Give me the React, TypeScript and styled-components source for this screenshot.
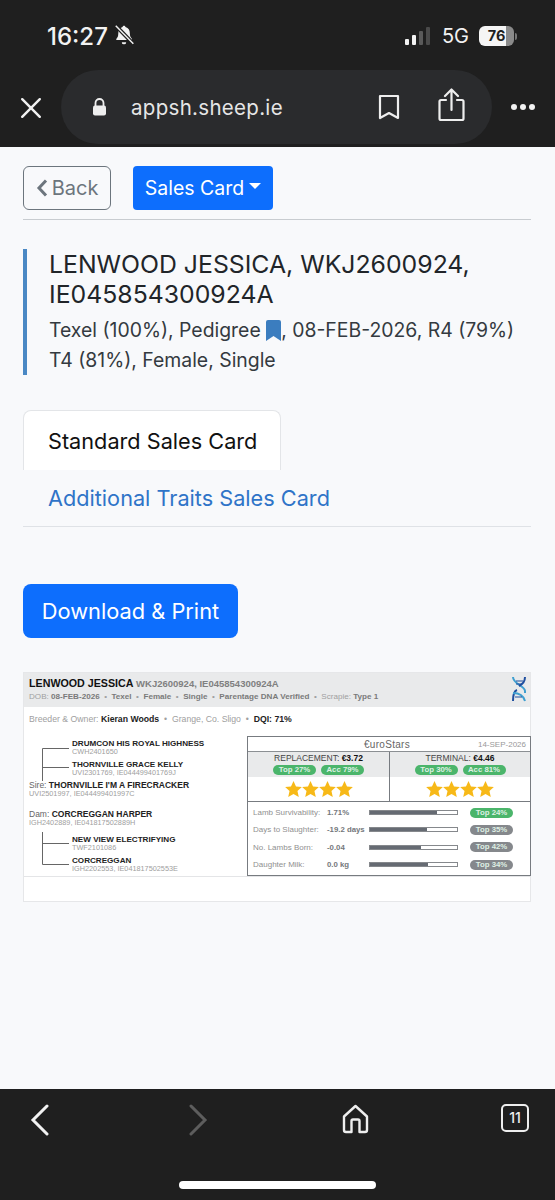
import React from "react";
import styled, { createGlobalStyle } from "styled-components";

const GlobalStyle = createGlobalStyle`
  html, body { margin: 0; padding: 0; background: #f8f9fb; }
  * { box-sizing: border-box; }
`;

const stats = [
  { label: "Lamb Survivability:", value: "1.71%", fill: 77, top: "Top 24%", good: true },
  { label: "Days to Slaughter:", value: "-19.2 days", fill: 66, top: "Top 35%", good: false },
  { label: "No. Lambs Born:", value: "-0.04", fill: 59, top: "Top 42%", good: false },
  { label: "Daughter Milk:", value: "0.0 kg", fill: 67, top: "Top 34%", good: false },
];

function Stars() {
  return (
    <StarRow>
      {[0, 1, 2, 3].map((i) => (
        <svg key={i} width="17" height="16" viewBox="0 0 24 23">
          <path d="M12 0l3.6 8 8.4.8-6.3 5.7 1.9 8.5L12 18.6 4.4 23l1.9-8.5L0 8.8 8.4 8z" fill="#f7b918" />
        </svg>
      ))}
    </StarRow>
  );
}

export default function App() {
  return (
    <Page>
      <GlobalStyle />
      <Chrome>
        <StatusBar>
          <Clock>16:27</Clock>
          <svg width="22" height="22" viewBox="0 0 20 20" fill="#f2f2f2">
            <path d="M10 1.5c.8 0 1.3.6 1.4 1.3 2.6.7 3.9 3 3.9 5.6 0 2.6.8 3.900 2 5.200v1H3v-1c1.200-1.300 1.800-2.600 1.800-5.200 0-2.600 1.300-4.900 3.800-5.600C8.700 2.100 9.200 1.500 10 1.500z" />
            <path d="M8 16.500h4a2 2 0 01-4 0z" />
            <path d="M2.500 1.500L18.500 18" stroke="#1f1f1f" strokeWidth="3.500" />
            <path d="M2.500 1.500L18.500 18" stroke="#f2f2f2" strokeWidth="1.300" />
          </svg>
          <StatusRight>
            <svg width="27" height="18" viewBox="0 0 27 18">
              <rect x="0" y="12" width="4" height="6" rx="1" fill="#f2f2f2" />
              <rect x="7" y="8" width="4" height="10" rx="1" fill="#f2f2f2" />
              <rect x="14" y="4" width="4" height="14" rx="1" fill="#5a5a5a" />
              <rect x="21" y="0" width="4" height="18" rx="1" fill="#4a4a4a" />
            </svg>
            <Network>5G</Network>
            <Battery>
              <BatteryBody>76</BatteryBody>
              <BatteryTip />
            </Battery>
          </StatusRight>
        </StatusBar>
        <UrlRow>
          <svg width="22" height="22" viewBox="0 0 20 20" stroke="#f2f2f2" strokeWidth="2.200" strokeLinecap="round">
            <path d="M2 2l16 16M18 2L2 18" />
          </svg>
          <UrlPill>
            <svg width="15" height="18" viewBox="0 0 15 18" fill="#eee">
              <path d="M3.500 8V5a4 4 0 018 0v3" fill="none" stroke="#eee" strokeWidth="1.800" />
              <rect x="1" y="7.500" width="13" height="10" rx="2" />
            </svg>
            <UrlText>appsh.sheep.ie</UrlText>
            <svg width="22" height="26" viewBox="0 0 22 26" fill="none" stroke="#eee" strokeWidth="2.200" strokeLinejoin="round">
              <path d="M2 2h18v22l-9-5-9 5z" />
            </svg>
            <ShareIcon width="27" height="34" viewBox="0 0 27 34" fill="none" stroke="#eee" strokeWidth="2.200" strokeLinecap="round" strokeLinejoin="round">
              <path d="M8 12H3a1.500 1.500 0 00-1.500 1.500v17A1.500 1.500 0 003 32h21a1.500 1.500 0 001.500-1.500v-17A1.500 1.500 0 0024 12h-5" />
              <path d="M13.500 22V2M7 8l6.500-6.500L20 8" />
            </ShareIcon>
          </UrlPill>
          <MoreDots>
            <i />
            <i />
            <i />
          </MoreDots>
        </UrlRow>
      </Chrome>

      <Content>
        <ButtonRow>
          <BackButton>
            <svg width="12" height="18" viewBox="0 0 12 18" fill="none" stroke="#6c757d" strokeWidth="3">
              <path d="M10 1.500L3 9l7 7.500" />
            </svg>
            Back
          </BackButton>
          <SalesButton>
            Sales Card
            <Caret />
          </SalesButton>
        </ButtonRow>
        <Rule />

        <TitleBlock>
          <Title>
            LENWOOD JESSICA, WKJ2600924,
            <br />
            IE045854300924A
          </Title>
          <Meta>
            Texel (100%), Pedigree{" "}
            <svg width="15" height="21" viewBox="0 0 15 21" fill="#3b7dbf">
              <path d="M0 2a2 2 0 012-2h11a2 2 0 012 2v19l-7.500-5L0 21z" />
            </svg>
            , 08-FEB-2026, R4 (79%)
            <br />
            T4 (81%), Female, Single
          </Meta>
        </TitleBlock>

        <Tabs>
          <ActiveTab>Standard Sales Card</ActiveTab>
          <TabLink>Additional Traits Sales Card</TabLink>
        </Tabs>

        <DownloadButton>Download &amp; Print</DownloadButton>

        <SalesCard>
          <CardHeader>
            <HeaderText>
              <SheepName>
                LENWOOD JESSICA <SheepTag>WKJ2600924, IE045854300924A</SheepTag>
              </SheepName>
              <SheepFacts>
                DOB: <b>08-FEB-2026</b>&nbsp; • &nbsp;<b>Texel</b>&nbsp; • &nbsp;<b>Female</b>&nbsp; • &nbsp;<b>Single</b>&nbsp; • &nbsp;
                <b>Parentage DNA Verified</b>&nbsp; • &nbsp;Scrapie: <b>Type 1</b>
              </SheepFacts>
            </HeaderText>
            <svg width="16" height="26" viewBox="0 0 16 26" fill="none" strokeWidth="2">
              <path d="M2 1c0 7 12 9 12 14v2" stroke="#3f9fd0" />
              <path d="M14 1c0 6-4 8-6 9M6 14c-3 1-4 4-4 11" stroke="#1f4f9f" />
              <path d="M2 17c4 0 10 1 12 8" stroke="#3f9fd0" />
              <path d="M5 5h7M4 21h7M5 8h6" stroke="#1f4f9f" strokeWidth="1.200" />
            </svg>
          </CardHeader>
          <BreederRow>
            Breeder &amp; Owner: <strong>Kieran Woods</strong>&nbsp; • &nbsp;Grange, Co. Sligo&nbsp; • &nbsp;<strong>DQI: 71%</strong>
          </BreederRow>
          <CardBody>
            <Pedigree>
              <Branch>
                <UpperBracket width="27" height="33" viewBox="0 0 27 33" fill="none" stroke="#666" strokeWidth="1">
                  <path d="M.5 .5V33M.5 .5H27M.5 19.500H27" />
                </UpperBracket>
                <Names>
                  <div>
                    <AnimalName $small>DRUMCON HIS ROYAL HIGHNESS</AnimalName>
                    <AnimalId>CWH2401650</AnimalId>
                  </div>
                  <div>
                    <AnimalName $small>THORNVILLE GRACE KELLY</AnimalName>
                    <AnimalId>UVI2301769, IE044499401769J</AnimalId>
                  </div>
                </Names>
              </Branch>
              <Parent>
                <AnimalName>
                  <Soft>Sire:</Soft> THORNVILLE I'M A FIRECRACKER
                </AnimalName>
                <AnimalId>UVI2501997, IE044499401997C</AnimalId>
              </Parent>
              <Parent $dam>
                <AnimalName>
                  <Soft>Dam:</Soft> CORCREGGAN HARPER
                </AnimalName>
                <AnimalId>IGH2402889, IE041817502889H</AnimalId>
              </Parent>
              <Branch $lower>
                <LowerBracket width="27" height="33" viewBox="0 0 27 33" fill="none" stroke="#666" strokeWidth="1">
                  <path d="M.5 0V32.500H27M.5 11.500H27" />
                </LowerBracket>
                <Names>
                  <div>
                    <AnimalName $small>NEW VIEW ELECTRIFYING</AnimalName>
                    <AnimalId>TWF2101086</AnimalId>
                  </div>
                  <div>
                    <AnimalName $small>CORCREGGAN</AnimalName>
                    <AnimalId>IGH2202553, IE041817502553E</AnimalId>
                  </div>
                </Names>
              </Branch>
            </Pedigree>
            <EuroStars>
              <EuroHeader>
                <EuroTitle>€uroStars</EuroTitle>
                <EuroDate>14-SEP-2026</EuroDate>
              </EuroHeader>
              <Scores>
                <ScoreCol>
                  <ScoreHead>
                    <ScoreLabel>
                      REPLACEMENT: <b>€3.72</b>
                    </ScoreLabel>
                    <PillRow>
                      <Pill $good>Top 27%</Pill>
                      <Pill $good>Acc 79%</Pill>
                    </PillRow>
                  </ScoreHead>
                  <Stars />
                </ScoreCol>
                <ScoreCol>
                  <ScoreHead>
                    <ScoreLabel>
                      TERMINAL: <b>€4.46</b>
                    </ScoreLabel>
                    <PillRow>
                      <Pill $good>Top 30%</Pill>
                      <Pill $good>Acc 81%</Pill>
                    </PillRow>
                  </ScoreHead>
                  <Stars />
                </ScoreCol>
              </Scores>
              <StatList>
                {stats.map((s) => (
                  <StatRow key={s.label}>
                    <StatLabel>{s.label}</StatLabel>
                    <StatValue>{s.value}</StatValue>
                    <Bar>
                      <BarFill style={{ width: `${s.fill}%` }} />
                    </Bar>
                    <Pill $good={s.good}>{s.top}</Pill>
                  </StatRow>
                ))}
              </StatList>
            </EuroStars>
          </CardBody>
        </SalesCard>
      </Content>

      <BottomBar>
        <NavIcons>
          <svg width="20" height="32" viewBox="0 0 20 32" fill="none" stroke="#f2f2f2" strokeWidth="3" strokeLinecap="round">
            <path d="M17 2L3 16l14 14" />
          </svg>
          <svg width="20" height="32" viewBox="0 0 20 32" fill="none" stroke="#5d5d5d" strokeWidth="3" strokeLinecap="round">
            <path d="M3 2l14 14L3 30" />
          </svg>
          <svg width="27" height="30" viewBox="0 0 27 30" fill="none" stroke="#eee" strokeWidth="2.400" strokeLinejoin="round">
            <path d="M13.500 2L2 12.500V26a2 2 0 002 2h5.500V17a1.500 1.500 0 011.500-1.500h5A1.500 1.500 0 0117.500 17v11H23a2 2 0 002-2V12.500z" />
          </svg>
          <TabCount>11</TabCount>
        </NavIcons>
        <HomeBar />
      </BottomBar>
    </Page>
  );
}

const Page = styled.div`
  width: 555px;
  height: 1200px;
  display: flex;
  flex-direction: column;
  background: #f8f9fb;
  font-family: Inter, "Liberation Sans", sans-serif;
  overflow: hidden;
`;

const Chrome = styled.header`
  height: 147px;
  background: #1f1f1f;
  color: #f2f2f2;
  flex: none;
`;

const StatusBar = styled.div`
  height: 70px;
  padding: 24px 38px 0 47px;
  display: flex;
  align-items: flex-start;
  gap: 5px;
`;

const Clock = styled.span`
  font-size: 24px;
  line-height: 26px;
  font-weight: 500;
`;

const StatusRight = styled.div`
  margin-left: auto;
  display: flex;
  align-items: center;
  height: 24px;
  gap: 10px;
`;

const Network = styled.span`
  font-size: 20px;
`;

const Battery = styled.div`
  display: flex;
  align-items: center;
  gap: 1px;
`;

const BatteryBody = styled.div`
  width: 35px;
  height: 20px;
  border-radius: 6px;
  background: linear-gradient(90deg, #f5f5f5 76%, #8a8a8a 76%);
  color: #1f1f1f;
  font-size: 14.500px;
  font-weight: 700;
  line-height: 20px;
  text-align: center;
`;

const BatteryTip = styled.div`
  width: 2px;
  height: 7px;
  background: #777;
  border-radius: 0 2px 2px 0;
`;

const UrlRow = styled.div`
  height: 77px;
  padding-left: 20px;
  display: flex;
  align-items: flex-start;
  gap: 19px;
  & > svg {
    margin-top: 27px;
  }
`;

const UrlPill = styled.div`
  width: 431px;
  height: 74px;
  border-radius: 37px;
  background: #2a2b2d;
  display: flex;
  align-items: center;
  padding: 0 27px 0 31px;
`;

const UrlText = styled.span`
  font-size: 20.500px;
  color: #e6e6e6;
  margin-left: 24px;
  margin-right: auto;
  letter-spacing: 0.3px;
`;

const ShareIcon = styled.svg`
  margin-left: 38px;
  margin-top: -4px;
`;

const MoreDots = styled.div`
  display: flex;
  gap: 3px;
  margin-top: 34px;
  i {
    width: 6px;
    height: 6px;
    border-radius: 50%;
    background: #f2f2f2;
  }
`;

const Content = styled.main`
  flex: 1;
  padding: 19px 24px 0 23px;
`;

const ButtonRow = styled.div`
  display: flex;
  gap: 22px;
`;

const BackButton = styled.button`
  width: 88px;
  height: 44px;
  border: 1px solid #6c757d;
  border-radius: 6px;
  background: transparent;
  color: #6c757d;
  font: 400 20px Inter, sans-serif;
  display: flex;
  align-items: center;
  justify-content: center;
  gap: 4px;
  padding: 0;
`;

const SalesButton = styled.button`
  width: 140px;
  height: 44px;
  border: none;
  border-radius: 4px;
  background: #0d6efd;
  color: #fff;
  font: 400 19.500px Inter, sans-serif;
  display: flex;
  align-items: center;
  justify-content: center;
  gap: 5px;
  padding: 0;
`;

const Caret = styled.span`
  border-top: 6px solid #fff;
  border-left: 6px solid transparent;
  border-right: 6px solid transparent;
  margin-bottom: 4px;
`;

const Rule = styled.hr`
  margin: 9px 0 0;
  border: none;
  height: 1px;
  background: #c8ccd0;
`;

const TitleBlock = styled.section`
  margin-top: 29px;
  height: 126px;
  border-left: 4px solid #4a88c4;
  padding: 0 0 0 22px;
`;

const Title = styled.h1`
  margin: 0;
  font-size: 24.800px;
  line-height: 30px;
  font-weight: 400;
  color: #212529;
  white-space: nowrap;
`;

const Meta = styled.p`
  margin: 6px 0 0;
  font-size: 19.400px;
  line-height: 30px;
  color: #343a40;
  white-space: nowrap;
  svg {
    vertical-align: -4px;
  }
`;

const Tabs = styled.nav`
  margin-top: 35px;
  height: 117px;
  border-bottom: 1px solid #dfe2e6;
`;

const ActiveTab = styled.div`
  width: 258px;
  height: 60px;
  border: 1px solid #e3e5e8;
  border-bottom: none;
  border-radius: 8px 8px 0 0;
  background: #fff;
  color: #111;
  font-size: 21.700px;
  line-height: 60px;
  padding-left: 24px;
`;

const TabLink = styled.a`
  display: block;
  margin-top: 13px;
  padding-left: 25px;
  font-size: 21.700px;
  line-height: 30px;
  color: #2f74c8;
`;

const DownloadButton = styled.button`
  display: block;
  margin-top: 57px;
  width: 215px;
  height: 54px;
  border: none;
  border-radius: 8px;
  background: #0d6efd;
  color: #fff;
  font: 400 21.800px Inter, sans-serif;
  padding: 0;
`;

const SalesCard = styled.section`
  margin-top: 34px;
  height: 230px;
  border: 1px solid #e6e7e9;
  background: #fff;
  font-family: "Liberation Sans", Arial, sans-serif;
`;

const CardHeader = styled.div`
  height: 34px;
  background: #e9eaeb;
  padding: 3px 3px 0 5px;
  display: flex;
  justify-content: space-between;
`;

const HeaderText = styled.div`
  white-space: nowrap;
`;

const SheepName = styled.div`
  font-size: 10.700px;
  line-height: 15px;
  font-weight: 700;
  color: #111;
`;

const SheepTag = styled.span`
  font-size: 9.500px;
  color: #808080;
`;

const SheepFacts = styled.div`
  font-size: 8.100px;
  line-height: 12px;
  color: #a0a0a0;
  b {
    color: #7a7a7a;
  }
`;

const BreederRow = styled.div`
  height: 29px;
  padding: 6px 0 0 5px;
  font-size: 8.700px;
  line-height: 12px;
  color: #a0a0a0;
  white-space: nowrap;
  strong {
    color: #222;
  }
`;

const CardBody = styled.div`
  display: flex;
  height: 141px;
  border-bottom: 1px solid #e4e5e7;
`;

const Pedigree = styled.div`
  width: 223px;
  flex: none;
  padding: 3px 0 0 5px;
`;

const Branch = styled.div<{ $lower?: boolean }>`
  display: flex;
  margin: ${(p) => (p.$lower ? "8px" : "0")} 0 0 13px;
`;

const UpperBracket = styled.svg`
  flex: none;
  margin-top: 9px;
  margin-bottom: -5px;
`;

const LowerBracket = styled.svg`
  flex: none;
  margin-top: -3px;
  margin-bottom: -3px;
`;

const Names = styled.div`
  margin-left: 3px;
  display: flex;
  flex-direction: column;
  gap: 4px;
`;

const Parent = styled.div<{ $dam?: boolean }>`
  margin-top: ${(p) => (p.$dam ? "12px" : "4px")};
`;

const AnimalName = styled.div<{ $small?: boolean }>`
  font-size: ${(p) => (p.$small ? "8.100px" : "8.500px")};
  line-height: 9px;
  font-weight: 700;
  color: #222;
  white-space: nowrap;
`;

const Soft = styled.span`
  font-weight: 400;
  color: #666;
`;

const AnimalId = styled.div`
  font-size: 7.300px;
  line-height: 8px;
  color: #a0a0a0;
  white-space: nowrap;
`;

const EuroStars = styled.div`
  width: 284px;
  height: 140px;
  flex: none;
  margin-right: -1px;
  border: 1px solid #777b80;
  display: flex;
  flex-direction: column;
`;

const EuroHeader = styled.div`
  height: 15px;
  flex: none;
  border-bottom: 1px solid #8b8f93;
  display: grid;
  grid-template-columns: 1fr auto 1fr;
  align-items: center;
  padding-right: 4px;
`;

const EuroTitle = styled.span`
  grid-column: 2;
  font-size: 10px;
  color: #666;
  letter-spacing: 0.3px;
`;

const EuroDate = styled.span`
  justify-self: end;
  font-size: 8px;
  color: #999;
`;

const Scores = styled.div`
  height: 50px;
  flex: none;
  display: grid;
  grid-template-columns: 141px 1fr;
  border-bottom: 1px solid #777b80;
`;

const ScoreCol = styled.div`
  display: flex;
  flex-direction: column;
  & + & {
    border-left: 1px solid #777b80;
  }
`;

const ScoreHead = styled.div`
  height: 25px;
  background: #e9eaeb;
  text-align: center;
`;

const ScoreLabel = styled.div`
  font-size: 8.500px;
  line-height: 12px;
  color: #444;
  b {
    color: #111;
  }
`;

const PillRow = styled.div`
  display: flex;
  justify-content: center;
  gap: 5px;
  margin-top: 1px;
`;

const Pill = styled.span<{ $good?: boolean }>`
  display: block;
  width: 43px;
  height: 10px;
  border-radius: 5px;
  background: ${(p) => (p.$good ? "#4bb56b" : "#85888c")};
  color: #dff0e4;
  font-size: 7.800px;
  line-height: 10px;
  font-weight: 700;
  text-align: center;
`;

const StarRow = styled.div`
  height: 24px;
  display: flex;
  align-items: center;
  justify-content: center;
`;

const StatList = styled.div`
  padding: 2px 17px 0 5px;
  display: flex;
  flex-direction: column;
`;

const StatRow = styled.div`
  height: 17.300px;
  display: flex;
  align-items: center;
`;

const StatLabel = styled.span`
  width: 74px;
  flex: none;
  font-size: 8px;
  color: #909090;
  white-space: nowrap;
`;

const StatValue = styled.span`
  width: 42px;
  flex: none;
  font-size: 7.800px;
  font-weight: 700;
  color: #74777b;
  white-space: nowrap;
`;

const Bar = styled.div`
  width: 89px;
  height: 5px;
  border: 1px solid #85888c;
  background: #fff;
  margin-right: 12px;
  flex: none;
`;

const BarFill = styled.div`
  height: 100%;
  background: #666b73;
`;

const BottomBar = styled.footer`
  height: 111px;
  flex: none;
  background: #1f1f1f;
  display: flex;
  flex-direction: column;
  align-items: center;
`;

const NavIcons = styled.div`
  width: 100%;
  height: 92px;
  padding: 15px 0 0 30px;
  display: grid;
  grid-template-columns: 158px 154px 159px auto;
  justify-items: start;
  align-items: start;
`;

const TabCount = styled.div`
  width: 28px;
  height: 28px;
  border: 2px solid #eee;
  border-radius: 5px;
  color: #eee;
  font-size: 14px;
  font-weight: 500;
  line-height: 24px;
  text-align: center;
`;

const HomeBar = styled.div`
  width: 197px;
  height: 8px;
  border-radius: 4px;
  background: #fff;
`;
